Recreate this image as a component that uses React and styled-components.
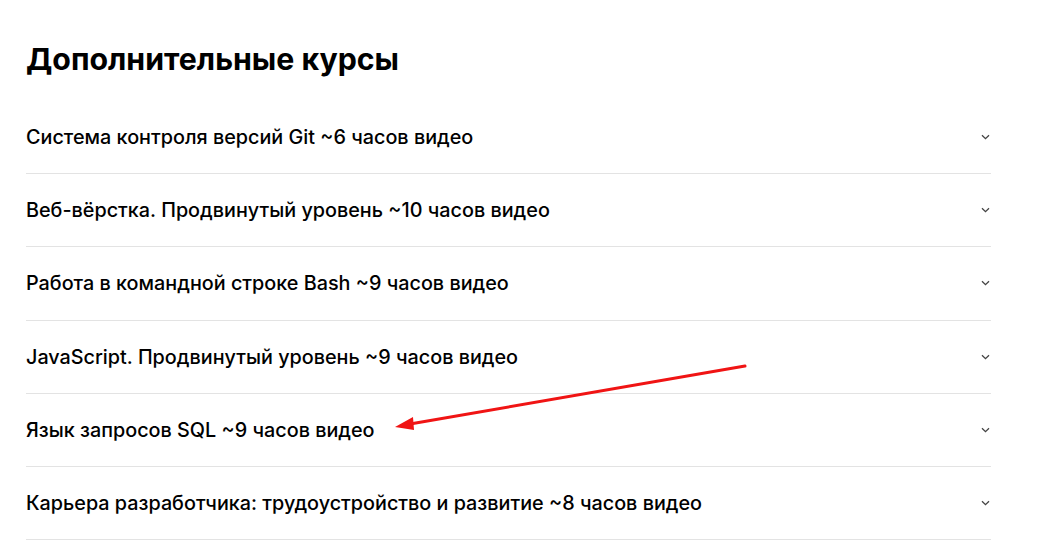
import React from 'react'
import styled, { createGlobalStyle } from 'styled-components'

const GlobalStyle = createGlobalStyle`
  body {
    margin: 0;
    background: #fff;
    font-family: Inter, "Noto Sans", sans-serif;
    color: #000;
  }
`

const Section = styled.section`
  position: relative;
  width: 965px;
  padding: 37px 0 0 26px;
`

const Title = styled.h2`
  margin: 0 0 20px;
  font-size: 30.3px;
  line-height: 44px;
  font-weight: 700;
`

const List = styled.ul`
  list-style: none;
  margin: 0;
  padding: 0;
`

const Row = styled.li`
  display: flex;
  align-items: center;
  justify-content: space-between;
  height: 72.2px;
  border-bottom: 1px solid #e3e3e3;
  font-size: 19.8px;
  font-weight: 500;
  cursor: pointer;
`

const Chevron = styled.svg`
  width: 9px;
  height: 6px;
  margin-right: 1px;
  flex-shrink: 0;
`

const Pointer = styled.svg`
  position: absolute;
  left: 0;
  top: 0;
  pointer-events: none;
`

const courses = [
  'Система контроля версий Git ~6 часов видео',
  'Веб-вёрстка. Продвинутый уровень ~10 часов видео',
  'Работа в командной строке Bash ~9 часов видео',
  'JavaScript. Продвинутый уровень ~9 часов видео',
  'Язык запросов SQL ~9 часов видео',
  'Карьера разработчика: трудоустройство и развитие ~8 часов видео',
]

const App = () => {
  return (
    <>
      <GlobalStyle />
      <Section>
        <Title>Дополнительные курсы</Title>
        <List>
          {courses.map((c) => (
            <Row key={c}>
              <span>{c}</span>
              <Chevron viewBox="0 0 9 6">
                <path d="M1 1.2l3.5 3.5L8 1.2" fill="none" stroke="#444" strokeWidth="1.3" />
              </Chevron>
            </Row>
          ))}
        </List>
        <Pointer width="1039" height="544">
          <line x1="745" y1="366" x2="410" y2="424" stroke="#f01414" strokeWidth="3" strokeLinecap="round" />
          <polygon points="395,427 413,417 414,430" fill="#f01414" />
        </Pointer>
      </Section>
    </>
  )
}

export default App
